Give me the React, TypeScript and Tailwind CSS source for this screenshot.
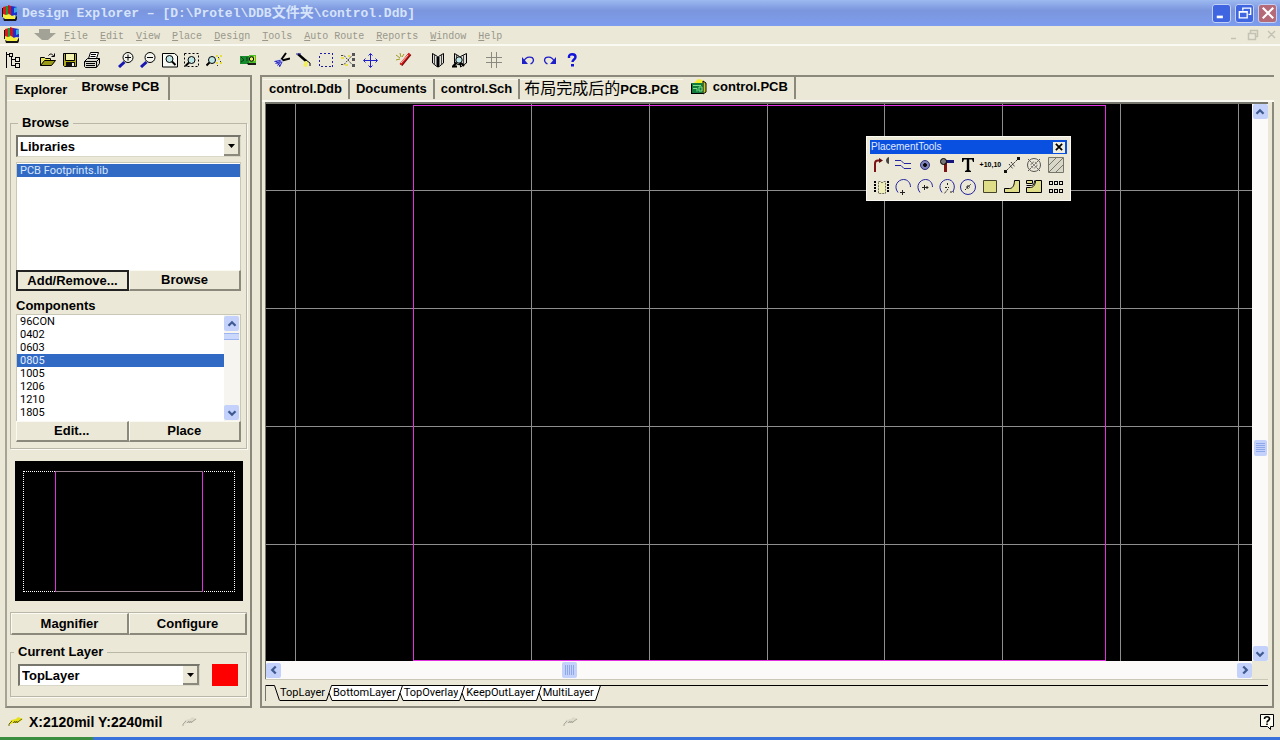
import React from 'react';
import type { ReactNode } from 'react';

const SANS = "font-['Liberation_Sans','Noto_Sans_CJK_SC',sans-serif]";
const SMALL = "font-[Roboto,'Liberation_Sans',sans-serif] text-[11px] font-normal";
const MONO = "font-['Liberation_Mono','Noto_Sans_CJK_SC',monospace]";

function Glyph({ children, className = 'size-4' }: { children: ReactNode; className?: string }) {
  return (
    <svg viewBox="0 0 16 16" className={className} fill="none" stroke="#000" strokeWidth="1" aria-hidden="true">
      {children}
    </svg>
  );
}

function AppLogo({ className = 'size-4' }: { className?: string }) {
  return (
    <Glyph className={className}>
      <g stroke="none">
        <path d="M0 3h2v9H0z" fill="#111" />
        <path d="M1 2l4-1v9H1z" fill="#e01818" />
        <path d="M4 1h3l1 4-2 5H4z" fill="#159a3c" />
        <path d="M6 0l3 1 1 9-3 1-1-4z" fill="#d41212" />
        <path d="M9 1l6 1v8l-6 1z" fill="#1c2fd0" />
        <path d="M12 3l3-1v5l-3 1z" fill="#38a8e0" />
        <path d="M1 9l3 1 3-1 3 2 3-1v4H3l-2-2z" fill="#f6ee3c" />
        <path d="M1 13l2 1h10l2-4v4l-1 2H2z" fill="#151515" />
      </g>
    </Glyph>
  );
}

const lens = '#bfe6e6';

const toolGroups: { name: string; art: ReactNode }[][] = [
  [
    {
      name: 'Panel tree',
      art: (
        <path d="M.5 0v16M1 2.500h3M3.500 1.500h3v3h-3zM5.500 5v9M6 7.500h3M6 13.500h3M9.500 5.500h4v4h-4zM9.500 11.500h4v4h-4z" shapeRendering="crispEdges" />
      ),
    },
  ],
  [
    {
      name: 'Open',
      art: (
        <>
          <path d="M.5 13.500V5.500h4l1 1h5v3" fill="#e8e45a" />
          <path d="M.5 13.500L4.500 8.500h11L11.500 13.500z" fill="#9a9a18" />
          <path d="M8.500 3.500c2-2.500 4-1.500 5 .5M14.500 1.500v3h-3" />
        </>
      ),
    },
    {
      name: 'Save',
      art: (
        <>
          <path d="M1.500 1.500h13v13h-12l-1-1z" fill="#b0aa16" />
          <path d="M4 2h8v6H4z" fill="#f4f2b0" stroke="none" />
          <path d="M3.500 2v6.500h9V2" />
          <path d="M4 10h9v5H4z" fill="#111" stroke="none" />
          <path d="M10 11h2v3h-2z" fill="#eee" stroke="none" />
        </>
      ),
    },
    {
      name: 'Print',
      art: (
        <>
          <path d="M4.500 6.500l2-6h8l-2 6z" fill="#fff" />
          <path d="M7 2.500h5M6.500 4.500h5" />
          <path d="M.5 9.500l3-3h12v5l-3 4H1.500l-1-1z" fill="#d8d8d0" />
          <path d="M.5 9.500h12v5.500M12.500 9.500l3-3M2 11.500h9M2 13.500h9" />
        </>
      ),
    },
  ],
  [
    {
      name: 'Zoom in',
      art: (
        <>
          <path d="M1 15l5.500-5" stroke="#1818b0" strokeWidth="3" />
          <circle cx="10" cy="5.500" r="5" fill="#f4f4ee" />
          <path d="M7 5.500h6M10 2.500v6" />
        </>
      ),
    },
    {
      name: 'Zoom out',
      art: (
        <>
          <path d="M1 15l5.500-5" stroke="#1818b0" strokeWidth="3" />
          <circle cx="10" cy="5.500" r="5" fill="#f4f4ee" />
          <path d="M7 5.500h6" />
        </>
      ),
    },
    {
      name: 'Fit document',
      art: (
        <>
          <path d="M.5 1.500h12l3 2.500v11H.5z" fill="#f8f8f2" />
          <circle cx="7.500" cy="7" r="3.500" fill={lens} />
          <path d="M10 9.500l3.500 3.500" strokeWidth="2" />
        </>
      ),
    },
    {
      name: 'Fit area',
      art: (
        <>
          <path d="M.5 1.500h14v13H.5z" strokeDasharray="2 2" />
          <circle cx="7.500" cy="8" r="3.500" fill={lens} />
          <path d="M5 10.500L1.500 14" strokeWidth="2" />
        </>
      ),
    },
    {
      name: 'Zoom selection',
      art: (
        <>
          <circle cx="6" cy="8" r="3.500" fill={lens} />
          <path d="M3.500 10.500L.5 13.500" strokeWidth="2" />
          <path d="M10 3h2v2h-2zM14 3h2v2h-2zM12 6h2v2h-2zM10 10h2v2h-2zM14 10h2v2h-2z" fill="#e6de3a" stroke="none" />
          <path d="M12 5h1v1h-1zM14 9h1v1h-1zM11 13h1v1h-1z" fill="#333" stroke="none" />
        </>
      ),
    },
  ],
  [
    {
      name: 'Cross probe',
      art: (
        <>
          <path d="M0 4h12v8H0z" fill="#168a2c" stroke="none" />
          <path d="M1 5l3 3-3 2M7 5v4" stroke="#0b3f14" />
          <path d="M9 3h7v9H9z" fill="#4fc02c" stroke="none" />
          <circle cx="11.500" cy="7" r="2.200" fill="#f5f06a" />
          <path d="M7 11h9v2H8z" fill="#1a1a1a" stroke="none" />
          <path d="M14.500 4v5" stroke="#e8e030" />
        </>
      ),
    },
  ],
  [
    {
      name: 'Cut',
      art: (
        <>
          <path d="M7 8l5-7M8 8.500l8-2" strokeWidth="2" />
          <path d="M0 9l7-2 2 2-4 6z" fill="#c9c9f4" stroke="none" />
          <path d="M.5 9.500l6-1M1.500 11.500l5-2M3.500 13.500l3.500-4M5.500 15l2.500-5M2 9l4 5" stroke="#2020b8" />
        </>
      ),
    },
    {
      name: 'Brush',
      art: (
        <>
          <path d="M2 2l8 7" strokeWidth="2.400" />
          <path d="M0 2h5" stroke="#2020a0" />
          <path d="M9 9l3 1-1 5-4-1 1-2z" fill="#f3ee55" stroke="none" />
          <path d="M10 8l4 3v3" />
        </>
      ),
    },
    { name: 'Select area', art: <path d="M1.500 1.500h13v13h-13z" stroke="#1c1ca8" strokeDasharray="2 2" shapeRendering="crispEdges" /> },
    {
      name: 'Deselect',
      art: (
        <>
          <path d="M1 3.500h3l8 9h3M1 12.500h3l8-9h3" stroke="#444" strokeDasharray="2 1" />
          <path d="M12 1h3v3h-3zM12 6h3v3h-3zM12 12h3v3h-3z" fill="#555" stroke="none" />
          <path d="M1 5h3v2H1zM5 12h3v2H5zM8 3h2v2H8z" fill="#e9e04a" stroke="none" />
        </>
      ),
    },
    {
      name: 'Move',
      art: (
        <path d="M8.500 2v13M2 8.500h13M6.500 3.500l2-2 2 2M6.500 13.500l2 2 2-2M3.500 6.500l-2 2 2 2M13.500 6.500l2 2-2 2" stroke="#2020c8" />
      ),
    },
  ],
  [
    {
      name: 'Run wizard',
      art: (
        <>
          <path d="M5 13L14 2" stroke="#7a0c0c" strokeWidth="3.500" />
          <path d="M4.500 12.500L13.500 1.500" stroke="#e32020" strokeWidth="2" />
          <path d="M5 11l7-8" stroke="#ffd0c0" />
          <path d="M4 1l1 4M0 3l4 3M0 8l4-1M8 2L6 5" stroke="#a09a20" />
        </>
      ),
    },
  ],
  [
    {
      name: 'Library',
      art: (
        <>
          <path d="M2.500 1.500l5 3v10.500l-5-4zM13.500 1.500l-5 3v10.500l5-4z" fill="#deded6" />
          <path d="M4.500 3v9.500M11.500 3v9.500" stroke="#444" />
          <path d="M6.500 5v9M9.500 5v9" stroke="#777" />
        </>
      ),
    },
    {
      name: 'Browse library',
      art: (
        <>
          <path d="M2.500 1.500l5 3v8.500l-5-2zM14.500 1.500l-6 3v10.500l6-4z" fill="#deded6" />
          <path d="M4.500 3v4M11.500 3v9" stroke="#444" />
          <circle cx="7" cy="8" r="3.200" fill={lens} />
          <path d="M4.500 10.500L1 14.500h4M9 11l3 3" strokeWidth="2" />
        </>
      ),
    },
  ],
  [{ name: 'Grid', art: <path d="M5.500 0v16M10.500 0v16M0 5.500h16M0 10.500h16" stroke="#8b8a80" shapeRendering="crispEdges" /> }],
  [
    {
      name: 'Undo',
      art: (
        <>
          <path d="M4 9c2-5 9-5 9.500-1 0 2-1 3-3 4" stroke="#2020c8" strokeWidth="1.300" />
          <path d="M2 5v7h6z" fill="#2020c8" stroke="none" />
        </>
      ),
    },
    {
      name: 'Redo',
      art: (
        <>
          <path d="M12 9c-2-5-9-5-9.500-1 0 2 1 3 3 4" stroke="#2020c8" strokeWidth="1.300" />
          <path d="M14 5v7H8z" fill="#2020c8" stroke="none" />
        </>
      ),
    },
    {
      name: 'Help',
      art: (
        <>
          <path d="M5 6V4.500C5 1.500 11.500 1.500 11.500 5c0 2.500-3 2.500-3 5" stroke="#1414d8" strokeWidth="2.400" />
          <path d="M7 12h3v2.500H7z" fill="#1414d8" stroke="none" />
        </>
      ),
    },
  ],
];

const navy = '#2424a0';

const placementTools: { name: string; art: ReactNode }[] = [
  {
    name: 'Route track',
    art: (
      <>
        <path d="M2 15V6.500c0-2 1-3 3-3H7" stroke="#7d1414" strokeWidth="2" />
        <path d="M6 1l4 2.500L6 6z" fill="#5c1010" stroke="none" />
        <path d="M16 0v7c-4-1-4-6 0-7z" fill="#444" stroke="none" />
      </>
    ),
  },
  { name: 'Line', art: <path d="M0 3.500h6l3 3h7M0 8.500h6l3 3h7" stroke={navy} /> },
  {
    name: 'Pad',
    art: (
      <>
        <circle cx="8" cy="8" r="4.500" fill="#7f83b8" stroke="#30307c" />
        <circle cx="8" cy="8" r="1.500" fill="#111" />
      </>
    ),
  },
  {
    name: 'Via',
    art: (
      <>
        <path d="M6 4.500h9" stroke="#16167c" strokeWidth="3" />
        <path d="M6.500 5v10" stroke="#7d1414" strokeWidth="3" />
        <circle cx="4.500" cy="4.500" r="3" fill="#777" />
      </>
    ),
  },
  {
    name: 'String',
    art: <path d="M2 1h12v4h-1L12 2.500H9.200V13l1.800 1v1H5v-1l1.800-1V2.500H4L3 5H2z" fill="#000" stroke="none" />,
  },
  { name: 'Coordinate', art: null },
  {
    name: 'Dimension',
    art: (
      <>
        <path d="M1 15L15 1M5 7l4 5M7 5l4 5M6 10l4-4" stroke="#333" strokeDasharray="2 1" />
        <path d="M0 13h3v3H0zM13 0h3v3h-3z" fill="#111" stroke="none" />
      </>
    ),
  },
  {
    name: 'Origin',
    art: (
      <>
        <circle cx="8" cy="8" r="6.500" stroke="#555" />
        <circle cx="8" cy="8" r="3" stroke="#777" strokeDasharray="2 1" />
        <path d="M2 2l12 12M14 2L2 14" stroke="#555" strokeDasharray="2 1" />
      </>
    ),
  },
  {
    name: 'Room',
    art: (
      <>
        <path d="M.5 .5h15v15H.5z" fill="#d8d7c8" stroke="#77766a" />
        <path d="M1 8l7-7M1 15L15 1M8 15l7-7" stroke="#77766a" />
      </>
    ),
  },
  {
    name: 'Component',
    art: (
      <>
        <path d="M5.500 2.500h2c0 1.500 3 1.500 3 0h2v12h-7z" fill="#f1efb8" stroke="#6d6d60" strokeDasharray="2 1" />
        <path d="M1 3h2M1 6h2M1 9h2M1 12h2M14 3h2M14 6h2M14 9h2M14 12h2" strokeWidth="2" />
      </>
    ),
  },
  {
    name: 'Arc by edge',
    art: (
      <>
        <path d="M3 13.500C-2 7 3 .5 8.500 .5c4 0 7 3 7 7.500" stroke={navy} />
        <path d="M5 13.500h5M7.500 11v5" stroke="#222" />
      </>
    ),
  },
  {
    name: 'Arc by center',
    art: (
      <>
        <path d="M3 13.500C-2 7 3 .5 8.500 .5c4 0 7 3 7 7.500" stroke={navy} />
        <path d="M5 8.500h6M7.500 6v5M9.500 7l1.500 1.500-1.500 1.500" stroke="#222" />
      </>
    ),
  },
  {
    name: 'Arc any angle',
    art: (
      <>
        <path d="M3 13.500C-2 7 3 .5 8.500 .5c6 0 9 7.500 5 12.500" stroke={navy} />
        <path d="M8.500 4v3M6 8.500h4M9 10l-4 5M11 13h4" stroke="#222" strokeDasharray="2 1" />
      </>
    ),
  },
  {
    name: 'Full circle',
    art: (
      <>
        <circle cx="8" cy="8" r="7.500" stroke={navy} />
        <path d="M5 11l6-6M6 8h4M8 6v4" stroke="#222" strokeDasharray="2 1" />
      </>
    ),
  },
  { name: 'Fill', art: <path d="M1.500 1.500h13v12h-13z" fill="#dfdd88" stroke="#44442a" /> },
  { name: 'Polygon plane', art: <path d="M.5 13.500v-4h5c3 0 5-3 5-8h5v12z" fill="#dfdd88" /> },
  {
    name: 'Split plane',
    art: (
      <>
        <path d="M.5 1.500h6v3h-6zM9.500 1.500h6v12H.5v-5h4c3 0 5-3 5-7z" fill="#dfdd88" />
        <path d="M.5 6.500h5c2 0 3-2 3-5" />
      </>
    ),
  },
  {
    name: 'Paste array',
    art: (
      <path d="M1.500 2.500h3v3h-3zM6.500 2.500h3v3h-3zM11.500 2.500h3v3h-3zM1.500 10.500h3v3h-3zM6.500 10.500h3v3h-3zM11.500 10.500h3v3h-3z" shapeRendering="crispEdges" />
    ),
  },
];

const menus = ['File', 'Edit', 'View', 'Place', 'Design', 'Tools', 'Auto Route', 'Reports', 'Window', 'Help'];
const footprints = ['96CON', '0402', '0603', '0805', '1005', '1206', '1210', '1805'];
const layers = ['TopLayer', 'BottomLayer', 'TopOverlay', 'KeepOutLayer', 'MultiLayer'];

function TitleBar() {
  const box = 'flex size-[19px] items-center justify-center rounded-[3px] border border-[#c3d0f5]';
  return (
    <header className="flex h-[26px] shrink-0 items-center bg-linear-to-b from-[#9db9f0] via-[#7b96dd] via-40% to-[#7d9cee] pr-[3px] pl-0.5">
      <AppLogo className="mr-1 size-4" />
      <h1 className={`${MONO} flex-1 truncate text-[13px] leading-4 font-bold whitespace-pre text-[#d5e3fb]`}>
        Design Explorer – [D:\Protel\DDB<span className="text-[14px] leading-4">文件夹</span>\control.Ddb]
      </h1>
      <div className="flex gap-1">
        <button aria-label="Minimize" className={`${box} bg-[#3f66e0]`}>
          <Glyph className="size-3.5"><path d="M2 12.500h7" stroke="#fff" strokeWidth="3" /></Glyph>
        </button>
        <button aria-label="Restore" className={`${box} bg-[#3f66e0]`}>
          <Glyph className="size-3.5">
            <path d="M5.500 5V2.500h9v7H12M5 2.500h10" stroke="#fff" strokeWidth="1.500" />
            <path d="M1.500 6.500h9v7h-9zM1 7h10" stroke="#fff" strokeWidth="1.500" />
          </Glyph>
        </button>
        <button aria-label="Close" className={`${box} bg-[#b56a78]`}>
          <Glyph className="size-3.5"><path d="M2 2l12 12M14 2L2 14" stroke="#fff" strokeWidth="2.400" /></Glyph>
        </button>
      </div>
    </header>
  );
}

function MenuBar() {
  return (
    <nav className="flex h-5 shrink-0 items-center border-b-2 border-[#fbfaf2] pr-1 pl-1">
      <AppLogo className="size-4" />
      <svg viewBox="0 0 22 12" className="mr-2 ml-3.5 h-3 w-[22px]" aria-hidden="true">
        <path d="M5 0h11v4h6l-8 7H8L0 4h5z" fill="#a3a297" />
      </svg>
      <ul className={`${MONO} flex gap-3 pt-[3px] text-[10px] leading-4 font-normal text-[#99978b]`}>
        {menus.map((m) => (
          <li key={m}>
            <button>
              <span className="underline">{m[0]}</span>
              {m.slice(1)}
            </button>
          </li>
        ))}
      </ul>
      <svg viewBox="0 0 46 12" className="ml-auto h-3 w-[46px]" fill="none" stroke="#c4c2b4" aria-hidden="true">
        <path d="M1 9.500h5M18.500 4.500h7v6h-7zM20.500 4V1.500h7v6H26M38 2l7 7M45 2l-7 7" strokeWidth="1.500" />
      </svg>
    </nav>
  );
}

function Toolbar() {
  return (
    <div role="toolbar" aria-label="Main tools" className="flex h-[29px] shrink-0 items-center gap-3 pb-0.5 pl-[3px]">
      {toolGroups.map((group, i) => (
        <div key={i} className="flex">
          {group.map((t) => (
            <button key={t.name} aria-label={t.name} className="flex h-6 w-[22px] items-center justify-center">
              <Glyph>{t.art}</Glyph>
            </button>
          ))}
        </div>
      ))}
    </div>
  );
}

function PushButton({ children, focused = false }: { children: ReactNode; focused?: boolean }) {
  return (
    <button
      className={
        focused
          ? 'h-full flex-1 border-2 border-[#222] text-center'
          : 'h-full flex-1 border-t border-r-2 border-b-2 border-l border-t-[#fbfaf2] border-r-[#8b897c] border-b-[#8b897c] border-l-[#fbfaf2] text-center'
      }
    >
      {children}
    </button>
  );
}

function Combo({ label, value, options, className }: { label: string; value: string; options: string[]; className: string }) {
  return (
    <div className={`relative ${className}`}>
      <select
        aria-label={label}
        defaultValue={value}
        className="h-[22px] w-full appearance-none border-t-2 border-l-2 border-r border-b border-t-[#77766c] border-r-[#d9d7c8] border-b-[#d9d7c8] border-l-[#77766c] bg-white pl-0.5 leading-4 outline-none"
      >
        {options.map((o) => (
          <option key={o}>{o}</option>
        ))}
      </select>
      <span className="pointer-events-none absolute top-0.5 right-px flex h-[19px] w-4 items-center justify-center border-r-2 border-b-2 border-[#8b897c] bg-[#ebe8d7]">
        <svg viewBox="0 0 7 4" className="h-1 w-[7px]" aria-hidden="true"><path d="M0 0h7L3.500 4z" /></svg>
      </span>
    </div>
  );
}

const chevrons = {
  up: 'M4 10l4-4 4 4',
  down: 'M4 6l4 4 4-4',
  left: 'M10 4L6 8l4 4',
  right: 'M6 4l4 4-4 4',
};

function ScrollButton({ dir }: { dir: keyof typeof chevrons }) {
  return (
    <button aria-label={`Scroll ${dir}`} className="flex size-[15px] shrink-0 items-center justify-center rounded-[2px] bg-[#c3d1fb]">
      <Glyph className="size-3.5"><path d={chevrons[dir]} stroke="#3f5a90" strokeWidth="2.600" /></Glyph>
    </button>
  );
}

const groupBox = 'min-w-0 border border-[#b9b7a8] shadow-[1px_1px_0_#fbfaf2]';

function SidePanel() {
  return (
    <aside className="flex w-[247px] shrink-0 flex-col border-t-2 border-r-2 border-b-2 border-l-2 border-t-[#8b897c] border-r-[#8b897c] border-b-[#8b897c] border-l-[#a5a395] pb-2">
      <div role="tablist" className="flex h-6 border-b border-[#fbfaf2] leading-4">
        <button role="tab" aria-selected="false" className="mt-0.5 w-[68px] border-t border-[#fbfaf2] text-center">Explorer</button>
        <button role="tab" aria-selected="true" className="w-[95px] border-r-2 border-[#8b897c] pr-0.5 pb-1 text-center">Browse PCB</button>
      </div>

      <fieldset className={`${groupBox} mx-[3px] mt-3.5 px-[5px] pb-1.5`}>
        <legend className="ml-0.5 px-1 leading-4">Browse</legend>
        <Combo label="Browse" value="Libraries" options={['Libraries', 'Components', 'Nets']} className="mt-1" />
        <ul role="listbox" aria-label="Libraries" className={`${SMALL} mt-[5px] h-[108px] border border-b-0 border-[#c9c7b6] bg-white`}>
          <li role="option" aria-selected="true" className="mt-px h-[13px] bg-[#316ac5] pl-[3px] leading-[13px] text-[#d8e6fb]">PCB Footprints.lib</li>
        </ul>
        <div className="flex h-[21px] leading-4">
          <PushButton focused>Add/Remove...</PushButton>
          <PushButton>Browse</PushButton>
        </div>
        <h2 className="mt-[7px] leading-4">Components</h2>
        <div className="flex h-[107px] border border-b-0 border-[#c9c7b6] bg-white">
          <ul role="listbox" aria-label="Components" className={`${SMALL} flex-1 leading-[13px]`}>
            {footprints.map((f) => (
              <li
                key={f}
                role="option"
                aria-selected={f === '0805'}
                className={f === '0805' ? 'bg-[#316ac5] pl-[3px] text-[#e3edfc]' : 'pl-[3px]'}
              >
                {f}
              </li>
            ))}
          </ul>
          <div className="flex w-4 flex-col bg-[#f6f5f0] pt-px pb-px">
            <ScrollButton dir="up" />
            <div className="mt-0.5 h-[7px] w-[15px] border-y border-[#9db4f0] bg-[#c9d8fb]" />
            <div className="flex-1" />
            <ScrollButton dir="down" />
          </div>
        </div>
        <div className="flex h-[21px] leading-4">
          <PushButton>Edit...</PushButton>
          <PushButton>Place</PushButton>
        </div>
      </fieldset>

      <div className="mt-3 mr-[7px] ml-2 h-[140px] bg-black px-2 pt-2.5 pb-[9px]">
        <div className="h-full border border-dotted border-white px-[31px]">
          <div className="-my-px h-[121px] border-x border-y border-x-[#e030e0] border-y-[#98828f]" />
        </div>
      </div>

      <div className="mx-[3px] mt-[11px] flex h-[23px] border-t border-l border-[#b9b7a8] leading-4">
        <PushButton>Magnifier</PushButton>
        <PushButton>Configure</PushButton>
      </div>

      <fieldset className={`${groupBox} mx-[3px] mt-[9px] pr-2 pb-2.5 pl-[7px]`}>
        <legend className="-ml-1 px-1 leading-4">Current Layer</legend>
        <div className="mt-1 flex items-start justify-between">
          <Combo label="Current Layer" value="TopLayer" options={layers} className="w-[182px]" />
          <button aria-label="Layer colour" className="h-[22px] w-[26px] bg-[#fe0000]" />
        </div>
      </fieldset>
    </aside>
  );
}

function DocumentTabs() {
  const tab = 'h-5 border-r-2 border-[#8b897c] px-1.5 leading-4 whitespace-nowrap shadow-[inset_0_1px_0_#f8f7ee]';
  return (
    <div role="tablist" className="flex h-[25px] items-end border-b-2 border-[#fbfaf2] pb-px pl-px">
      <button role="tab" aria-selected="false" className={tab}>control.Ddb</button>
      <button role="tab" aria-selected="false" className={tab}>Documents</button>
      <button role="tab" aria-selected="false" className={tab}>control.Sch</button>
      <button role="tab" aria-selected="false" className="h-5 px-1 leading-4 whitespace-nowrap shadow-[inset_0_1px_0_#f8f7ee]">
        <span className="text-base leading-4 font-normal">布局完成后的</span>PCB.PCB
      </button>
      <button role="tab" aria-selected="true" className="flex h-[22px] items-center gap-1.5 border-r-2 border-[#8b897c] pr-1.5 pb-0.5 pl-2 leading-4">
        <Glyph>
          <path d="M3 4l4-4 5 1v3z" fill="#f4ec2e" stroke="none" />
          <path d="M12 2l3 2v9l-3 2z" fill="#c8c62a" />
          <path d="M0 4h12v10H0z" fill="#147a3c" stroke="none" />
          <path d="M2 6.500h8M2 9.500h4v3M8 8h3v4H8z" stroke="#7be08a" />
          <path d="M0 14.500h12M.5 5v9" />
        </Glyph>
        control.PCB
      </button>
    </div>
  );
}

function PlacementTools() {
  return (
    <section className="absolute top-8 left-[600px] w-[205px] border border-[#fbfaf2] bg-[#ebe8d7] px-[3px] pt-[3px] pb-0.5 font-normal">
      <div className="flex h-[14px] items-center justify-between bg-[#0a50e0] pr-0.5 pl-px">
        <h2 className="text-[10px] leading-3 text-[#e0ecff]">PlacementTools</h2>
        <button aria-label="Close placement tools" className="flex h-[11px] w-3 items-center justify-center bg-[#f0eee0]">
          <Glyph className="size-2.5"><path d="M3 3l10 10M13 3L3 13" strokeWidth="2.800" /></Glyph>
        </button>
      </div>
      <div className="grid grid-cols-9">
        {placementTools.map((t) => (
          <button key={t.name} aria-label={t.name} className="flex h-[22px] min-w-0 items-center justify-center">
            {t.name === 'Coordinate' ? (
              <span className="text-[7px] leading-3 font-bold">+10,10</span>
            ) : (
              <Glyph>{t.art}</Glyph>
            )}
          </button>
        ))}
      </div>
    </section>
  );
}

const gridX = [29, 265, 383, 501, 618, 736, 854, 972];
const gridY = [86, 204, 322, 440];

function Board() {
  return (
    <div className="relative min-h-[557px] min-w-0 flex-1 overflow-hidden bg-black">
      <svg className="absolute inset-0 size-full" shapeRendering="crispEdges" aria-hidden="true">
        {gridX.map((x) => (
          <rect key={x} x={x} y="0" width="1" height="100%" fill="#8e8e8e" />
        ))}
        {gridY.map((y) => (
          <rect key={y} x="0" y={y} width="100%" height="1" fill="#8e8e8e" />
        ))}
        <g fill="#e030e0">
          <rect x="147" y="1" width="1" height="556" />
          <rect x="839" y="1" width="1" height="556" />
          <rect x="147" y="1" width="693" height="1" />
          <rect x="147" y="556" width="693" height="1" />
        </g>
      </svg>
      <PlacementTools />
    </div>
  );
}

function LayerTabs() {
  return (
    <div role="tablist" aria-label="Layers" className={`${SMALL} flex h-4 leading-[15px]`}>
      <svg viewBox="0 0 14 16" className="h-4 w-[14px]" fill="none" stroke="#000" aria-hidden="true">
        <path d="M0 .5h8.500l5 15" />
      </svg>
      {layers.map((l, i) => (
        <React.Fragment key={l}>
          <button
            role="tab"
            aria-selected={i === 0}
            className={i === 0 ? 'border-b border-black' : 'border-y border-black bg-white leading-[14px]'}
          >
            {l}
          </button>
          <svg viewBox="0 0 8 16" className="h-4 w-2" aria-hidden="true">
            {i > 0 && <path d="M0 0h7L1 16H0z" fill="#fff" />}
            {i < layers.length - 1 && <path d="M6 0h2v16H7L4 8z" fill="#fff" />}
            <path
              d={i < layers.length - 1 ? 'M0 15.500h1.500L6.500 .5H8M4 8l3 7.500h1' : 'M0 15.500h1.500L6.500 .5H8'}
              fill="none"
              stroke="#000"
            />
            {i > 0 && <path d="M0 .5h7" stroke="#000" />}
          </svg>
        </React.Fragment>
      ))}
      <div className="flex-1 border-t border-black" />
    </div>
  );
}

function Workspace() {
  return (
    <main className="flex min-w-0 flex-1 flex-col border-t-2 border-b-2 border-l-2 border-t-[#8b897c] border-b-[#8b897c] border-l-[#8b897c]">
      <DocumentTabs />
      <div className="flex flex-1 flex-col border-r-2 border-[#8b897c] pr-1 pb-[5px] pl-[3px]">
        <div className="flex flex-1 border-t-2 border-l border-[#77766c]">
          <Board />
          <div className="flex w-4 flex-col items-center bg-[#fbfaf8]">
            <ScrollButton dir="up" />
            <div className="flex-[320]" />
            <div className="flex h-4 w-[13px] flex-col justify-center gap-px rounded-[2px] bg-[#c3d1fb] px-0.5">
              {[0, 1, 2, 3, 4].map((n) => (
                <span key={n} className="h-px bg-[#8fa8ea]" />
              ))}
            </div>
            <div className="flex-[190]" />
            <ScrollButton dir="down" />
          </div>
        </div>
        <div className="mr-4 flex h-[18px] items-center border-l border-[#77766c] bg-[#fbfaf8]">
          <ScrollButton dir="left" />
          <div className="flex-[281]" />
          <div className="flex h-4 w-[15px] justify-center gap-px rounded-[2px] bg-[#c3d1fb] py-[3px]">
            {[0, 1, 2, 3, 4].map((n) => (
              <span key={n} className="w-px bg-[#8fa8ea]" />
            ))}
          </div>
          <div className="flex-[660]" />
          <ScrollButton dir="right" />
        </div>
        <div className="mb-[5px] border-t border-[#c9c7b6]" />
        <div className="border-l border-[#77766c]">
          <LayerTabs />
        </div>
      </div>
    </main>
  );
}

function Feather({ color, shade }: { color: string; shade: string }) {
  return (
    <svg viewBox="0 0 16 12" className="h-3 w-4" aria-hidden="true">
      <path d="M1 9l2-5 5-1 2-2 5 2-5 4H5z" fill={color} />
      <path d="M1 10V8l3-3M5 7l2-2v2l2-2v2l2-2 3-2" fill="none" stroke={shade} />
    </svg>
  );
}

function StatusBar() {
  return (
    <footer className="shrink-0">
      <div className="flex h-[29px] items-center pr-[5px] pb-0.5 pl-2">
        <Feather color="#e6e018" shade="#6f6a10" />
        <span className="mr-5 ml-[5px] text-[14px] leading-4">X:2120mil Y:2240mil</span>
        <Feather color="#dddacb" shade="#aaa899" />
        <div className="flex-[367]" />
        <Feather color="#dddacb" shade="#aaa899" />
        <div className="flex-[684]" />
        <button aria-label="Status help">
          <Glyph>
            <path d="M1.500 .5h13v12h-3v3l-3-3h-7z" fill="#fdfcf0" />
            <path d="M5.500 5c0-3 5-3 5 0 0 1.500-2.500 1.500-2.500 3.500M8 9.500v1.500" strokeWidth="1.600" />
          </Glyph>
        </button>
      </div>
      <div className="flex h-[3px] bg-[#3a72dc]">
        <div className="w-[93px] bg-[#3b8d3f]" />
      </div>
    </footer>
  );
}

export default function App() {
  return (
    <div className={`${SANS} flex min-h-screen flex-col bg-[#ebe8d7] text-[13px] font-bold text-black`}>
      <TitleBar />
      <MenuBar />
      <Toolbar />
      <div className="flex flex-1 gap-2 pr-1.5 pl-[5px]">
        <SidePanel />
        <Workspace />
      </div>
      <StatusBar />
    </div>
  );
}
